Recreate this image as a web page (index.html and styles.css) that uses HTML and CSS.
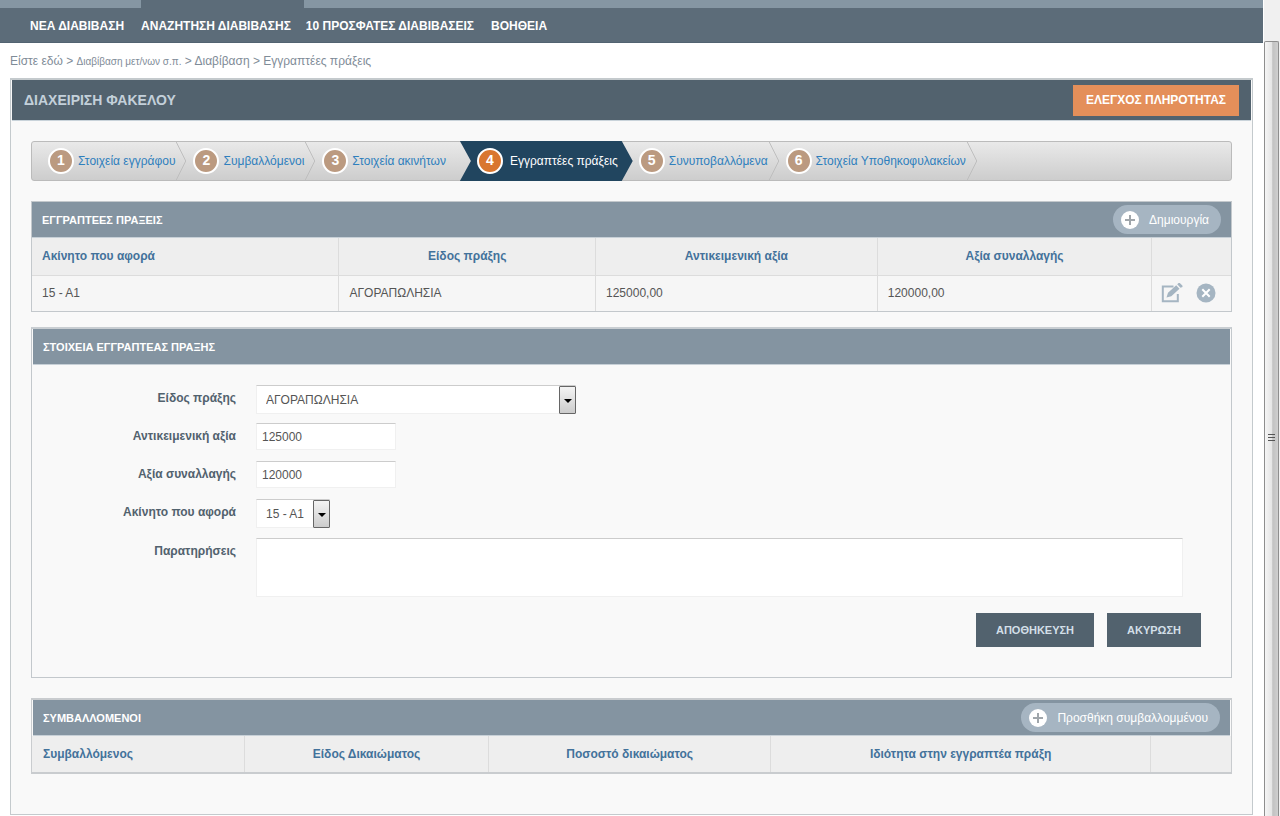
FILE: index.html
```html
<!DOCTYPE html>
<html lang="el">
<head>
<meta charset="utf-8">
<title>Διαχείριση Φακέλου</title>
<link rel="stylesheet" href="styles.css">
</head>
<body>
<div class="page">
  <header class="topbar">
    <nav class="nav">
      <a href="#">ΝΕΑ ΔΙΑΒΙΒΑΣΗ</a>
      <a href="#" class="current">ΑΝΑΖΗΤΗΣΗ ΔΙΑΒΙΒΑΣΗΣ</a>
      <a href="#">10 ΠΡΟΣΦΑΤΕΣ ΔΙΑΒΙΒΑΣΕΙΣ</a>
      <a href="#">ΒΟΗΘΕΙΑ</a>
    </nav>
  </header>
  <div class="crumbs">Είστε εδώ &gt; <a href="#" class="small">Διαβίβαση μετ/νων σ.π.</a> &gt; <a href="#">Διαβίβαση</a> &gt; <a href="#">Εγγραπτέες πράξεις</a></div>

  <main class="panel">
    <div class="panel-head">
      <h1>ΔΙΑΧΕΙΡΙΣΗ ΦΑΚΕΛΟΥ</h1>
      <button type="button" class="check">ΕΛΕΓΧΟΣ ΠΛΗΡΟΤΗΤΑΣ</button>
    </div>
    <div class="panel-body">
      <div class="steps">
        <a href="#" class="step"><span class="num">1</span><span class="txt">Στοιχεία εγγράφου</span><svg class="chev" viewBox="0 0 12 40"><path d="M1 0L11 20L1 40"/></svg></a>
        <a href="#" class="step"><span class="num">2</span><span class="txt">Συμβαλλόμενοι</span><svg class="chev" viewBox="0 0 12 40"><path d="M1 0L11 20L1 40"/></svg></a>
        <a href="#" class="step before-active"><span class="num">3</span><span class="txt">Στοιχεία ακινήτων</span></a>
        <a href="#" class="step active"><span class="num">4</span><span class="txt">Εγγραπτέες πράξεις</span></a>
        <a href="#" class="step"><span class="num">5</span><span class="txt">Συνυποβαλλόμενα</span><svg class="chev" viewBox="0 0 12 40"><path d="M1 0L11 20L1 40"/></svg></a>
        <a href="#" class="step"><span class="num">6</span><span class="txt">Στοιχεία Υποθηκοφυλακείων</span><svg class="chev" viewBox="0 0 12 40"><path d="M1 0L11 20L1 40"/></svg></a>
      </div>

      <section class="box acts">
        <div class="box-head">
          <h2>ΕΓΓΡΑΠΤΕΕΣ ΠΡΑΞΕΙΣ</h2>
          <button type="button" class="pill"><svg viewBox="0 0 18 18"><circle cx="9" cy="9" r="9"/><path d="M9 4v10M4 9h10"/></svg>Δημιουργία</button>
        </div>
        <table>
          <colgroup><col class="a1"><col class="a2"><col class="a3"><col class="a4"><col></colgroup>
          <thead><tr><th>Ακίνητο που αφορά</th><th>Είδος πράξης</th><th>Αντικειμενική αξία</th><th>Αξία συναλλαγής</th><th></th></tr></thead>
          <tbody><tr><td>15 - Α1</td><td>ΑΓΟΡΑΠΩΛΗΣΙΑ</td><td>125000,00</td><td>120000,00</td>
            <td class="tools"><div class="tool-row">
              <button type="button" class="icon" aria-label="Επεξεργασία"><svg width="22" height="20" viewBox="0 0 22 20"><path d="M12.500 3.500H1.800v14.700h15V11" fill="none" stroke="#a5b5c2" stroke-width="2"/><path d="M5.500 14.500L7 9.800L15.200 2.200l3.300 3.500L10.300 13.300zM16.200 1.300L17.600 0h1.200l2.700 2.800v1.200L19.500 4.800z" fill="#a5b5c2"/></svg></button>
              <button type="button" class="icon" aria-label="Διαγραφή"><svg width="20" height="20" viewBox="0 0 20 20"><circle cx="10" cy="10" r="9.500" fill="#a5b5c2"/><path d="M6.300 6.300l7.400 7.400M13.700 6.300l-7.400 7.400" stroke="#fff" stroke-width="2"/></svg></button>
            </div></td></tr></tbody>
        </table>
      </section>

      <section class="box form-box">
        <div class="box-head framed"><h2>ΣΤΟΙΧΕΙΑ ΕΓΓΡΑΠΤΕΑΣ ΠΡΑΞΗΣ</h2></div>
        <form class="form">
          <label for="kind">Είδος πράξης</label>
          <div class="select wide"><select id="kind"><option>ΑΓΟΡΑΠΩΛΗΣΙΑ</option></select><span class="drop"></span></div>
          <label for="objective">Αντικειμενική αξία</label>
          <input id="objective" type="text" value="125000">
          <label for="amount">Αξία συναλλαγής</label>
          <input id="amount" type="text" value="120000">
          <label for="estate">Ακίνητο που αφορά</label>
          <div class="select narrow"><select id="estate"><option>15 - Α1</option></select><span class="drop"></span></div>
          <label for="notes">Παρατηρήσεις</label>
          <textarea id="notes"></textarea>
          <div class="actions">
            <button type="button">ΑΠΟΘΗΚΕΥΣΗ</button>
            <button type="button">ΑΚΥΡΩΣΗ</button>
          </div>
        </form>
      </section>

      <section class="box parties">
        <div class="box-head framed">
          <h2>ΣΥΜΒΑΛΛΟΜΕΝΟΙ</h2>
          <button type="button" class="pill"><svg viewBox="0 0 18 18"><circle cx="9" cy="9" r="9"/><path d="M9 4v10M4 9h10"/></svg>Προσθήκη συμβαλλομμένου</button>
        </div>
        <table>
          <colgroup><col class="b1"><col class="b2"><col class="b3"><col class="b4"><col></colgroup>
          <thead><tr><th>Συμβαλλόμενος</th><th>Είδος Δικαιώματος</th><th>Ποσοστό δικαιώματος</th><th>Ιδιότητα στην εγγραπτέα πράξη</th><th></th></tr></thead>
        </table>
      </section>
    </div>
  </main>
</div>
<div class="scroll"><div class="thumb"><i></i><i></i><i></i></div></div>
</body>
</html>
```
FILE: styles.css
```css
* { box-sizing: border-box; }
body {
  margin: 0;
  display: flex;
  min-height: 100vh;
  background: #fff;
  font: 12px/16px "Liberation Sans", Arial, sans-serif;
  color: #555;
}
a { text-decoration: none; color: inherit; }
h1, h2 { margin: 0; }
button, input, select, textarea { font: inherit; color: inherit; margin: 0; border: 0; border-radius: 0; }
button { padding: 0; cursor: pointer; }

.page { flex: 1; min-width: 0; margin-right: 1px; }

.topbar { background: linear-gradient(#8596a3 8px, #5c6c79 8px); border-bottom: 1px solid #526371; }
.nav { display: flex; gap: 17px; padding-left: 30px; font-weight: bold; color: #fff; }
.nav a { padding: 18px 0 8px; }
.nav .current { background: #5c6c79; margin-right: -15px; padding-right: 13px; }

.crumbs { padding: 10px 10px 9px; color: #7f8c98; line-height: 16px; white-space: nowrap; }
.crumbs .small { font-size: 10px; line-height: 12px; }

.panel { margin: 0 10px; border: 1px solid #c4cacd; border-top-width: 2px; background: #f9f9f9; }
.panel-head {
  display: flex; align-items: center; justify-content: space-between;
  height: 41px; margin: 0 1px; padding: 0 12px;
  background: #52626e; border-bottom: 1px solid #c9d3da;
}
.panel-head h1 { font-size: 14px; color: #c3d0da; }
.check { height: 31px; padding: 0 13px; background: #e48f5a; color: #fff; font-weight: bold; }
.panel-body { padding: 20px 20px 40px; }

.steps {
  display: flex; height: 40px; padding-left: 10px;
  border: 1px solid #bbb; border-radius: 3px;
  background: linear-gradient(#e9e9e9, #cdcdcd);
}
.step { display: flex; align-items: center; height: 38px; padding-left: 6px; color: #2f7fbd; white-space: nowrap; }
.num {
  width: 26px; height: 26px; margin-right: 4px;
  border: 2px solid #fff; border-radius: 50%;
  background: #bb9a80; color: #fff;
  font-size: 14px; line-height: 20px; font-weight: bold; text-align: center;
}
.chev { width: 12px; height: 38px; fill: none; stroke: #bdbdbd; }
.before-active { padding-right: 26px; }
.active {
  height: 40px; margin: -1px 0 -1px -12px; padding: 0 15px 0 17px;
  background: #21455f; color: #fff;
  clip-path: polygon(0 0, calc(100% - 11px) 0, 100% 50%, calc(100% - 11px) 100%, 0 100%, 11px 50%);
}
.active .num { background: #d9762f; margin-right: 7px; }

.box { border: 1px solid #c3c8cc; }
.acts { margin-top: 20px; }
.form-box { margin-top: 15px; border-top: 2px solid #c9ced2; }
.parties { margin-top: 20px; border-color: #c9cccf; border-width: 2px 1px; }
.box-head {
  display: flex; align-items: center; justify-content: space-between;
  height: 36px; padding: 0 10px;
  background: #8494a1; border-bottom: 1px solid #c7d0d7;
}
.framed { margin: 0 1px; }
.box-head h2 { font-size: 11px; color: #fff; }
.pill {
  display: flex; align-items: center; gap: 10px;
  height: 29px; padding: 0 12px 0 8px;
  border-radius: 15px; background: #a6b5c2; color: #fff;
}
.pill svg { width: 18px; height: 18px; fill: #fff; stroke: none; }
.pill path { stroke: #a0a6ab; stroke-width: 2; }

table { width: 100%; border-collapse: collapse; table-layout: fixed; }
th { height: 37px; padding: 0 10px; background: #eee; color: #43729b; border-left: 1px solid #dcdcdc; }
td { height: 36px; padding: 0 10px; background: #f6f6f6; border-left: 1px solid #dcdcdc; border-top: 1px solid #dcdcdc; }
th:first-child, td:first-child { border-left: 0; }
th:first-child { text-align: left; }
.parties th { height: 36px; }
.parties th:first-child { padding-left: 11px; }
.a1 { width: 25.6%; } .a2 { width: 21.4%; } .a3 { width: 23.5%; } .a4 { width: 22.9%; }
.b1 { width: 17.7%; } .b2 { width: 20.4%; } .b3 { width: 23.5%; } .b4 { width: 31.7%; }
td.tools { padding: 0 9px; }
.tool-row { display: flex; gap: 13px; }
.icon { display: flex; background: none; }

.form {
  display: grid; grid-template-columns: 204px 1fr; column-gap: 20px; row-gap: 10px;
  padding: 20px 30px 30px 0;
}
.form label { height: 28px; padding-top: 5px; text-align: right; font-weight: bold; color: #52626e; }
.form input, .form textarea, .form select {
  background: #fff; border: 1px solid #f0f0f0; border-top-color: #ccc; color: #555;
}
.form input { width: 140px; height: 27px; padding: 0 5px; }
.form textarea { display: block; width: calc(100% - 18px); height: 59px; margin-bottom: 6px; resize: none; }
.select { position: relative; height: 29px; }
.select select { width: 100%; height: 100%; padding: 0 9px; appearance: none; }
.wide { width: 320px; margin-bottom: -1px; }
.narrow { width: 74px; }
.drop {
  position: absolute; right: 0; top: 1px; bottom: 0; width: 17px;
  border: 1px solid #666; border-radius: 1px;
  background: linear-gradient(#f4f4f4, #ccc);
  pointer-events: none;
}
.drop::after {
  content: ""; position: absolute; left: 4px; top: 12px;
  border: 4px solid transparent; border-top-color: #000; border-bottom: 0;
}
.actions { grid-column: 1 / 3; display: flex; justify-content: flex-end; gap: 13px; }
.actions button { height: 34px; padding: 0 20px; background: #52626e; color: #d3dfe8; font-size: 11px; font-weight: bold; }

.scroll { width: 16px; padding-top: 41px; background: #f0f0f0; display: flex; }
.thumb {
  flex: 1; margin-right: 1px; padding-top: 16px;
  display: flex; flex-direction: column; align-items: center; justify-content: center; gap: 2px;
  border: 1px solid #8e8e8e; border-bottom: 0; border-radius: 2px 2px 0 0;
  background: linear-gradient(90deg, #f5f5f5, #e6e6e6 50%, #c2c2c2 60%, #cfcfcf);
}
.thumb i { width: 7px; height: 1px; background: #555; }
```
